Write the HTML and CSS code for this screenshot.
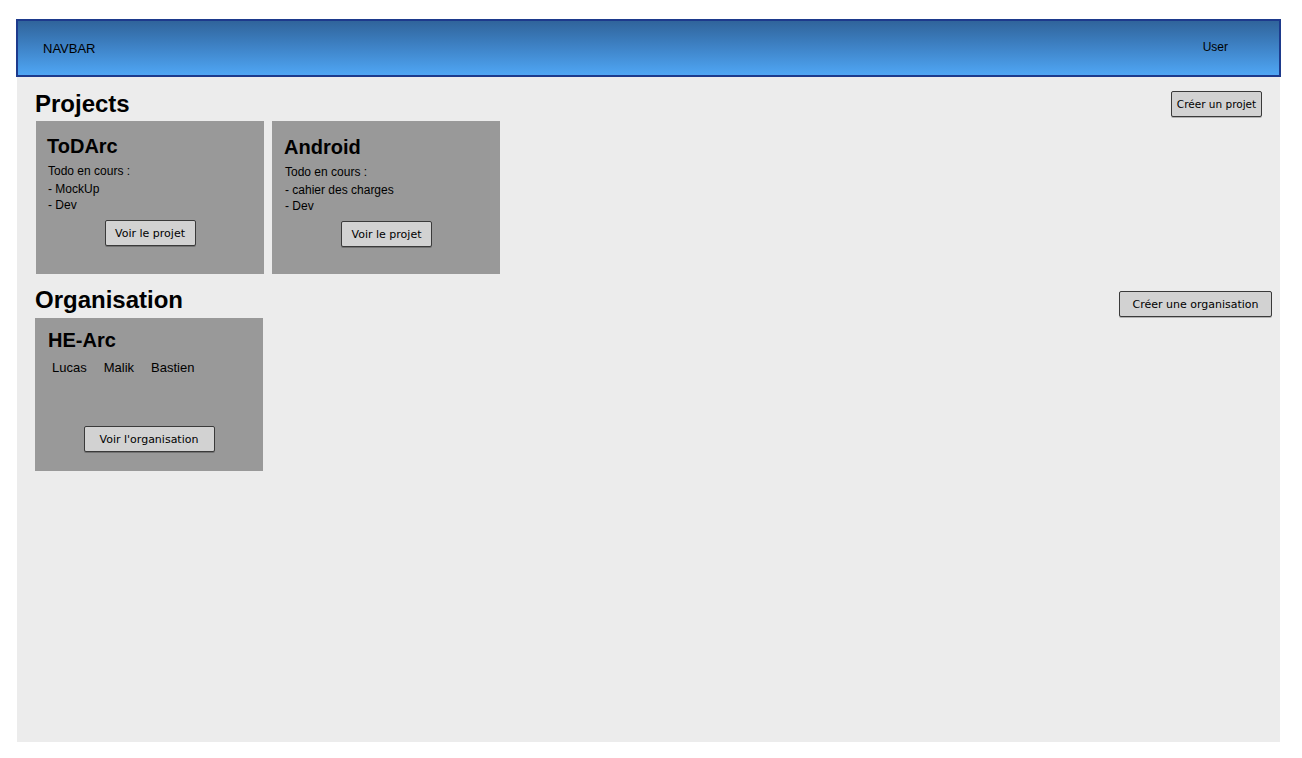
FILE: index.html
```html
<!DOCTYPE html>
<html lang="fr">
<head>
<meta charset="utf-8">
<title>Mockup</title>
<link rel="stylesheet" href="styles.css">
</head>
<body>
<div class="canvas">
  <header class="navbar">
    <span class="brand">NAVBAR</span>
    <span class="user">User</span>
  </header>
  <main class="content">
    <section class="section">
      <div class="section-head">
        <h2 class="section-title">Projects</h2>
        <button class="sketch-btn btn-new-project">Créer un projet</button>
      </div>
      <div class="cards cards-projects">
        <div class="card">
          <h3 class="card-title">ToDArc</h3>
          <p class="card-line first">Todo en cours :</p>
          <p class="card-line gap">- MockUp</p>
          <p class="card-line">- Dev</p>
          <button class="sketch-btn btn-view">Voir le projet</button>
        </div>
        <div class="card card-shift">
          <h3 class="card-title">Android</h3>
          <p class="card-line first">Todo en cours :</p>
          <p class="card-line gap">- cahier des charges</p>
          <p class="card-line">- Dev</p>
          <button class="sketch-btn btn-view">Voir le projet</button>
        </div>
      </div>
    </section>
    <section class="section section-org">
      <div class="section-head">
        <h2 class="section-title">Organisation</h2>
        <button class="sketch-btn btn-new-org">Créer une organisation</button>
      </div>
      <div class="cards cards-org">
        <div class="card org-card">
          <h3 class="card-title">HE-Arc</h3>
          <div class="members">
            <span>Lucas</span><span>Malik</span><span>Bastien</span>
          </div>
          <button class="sketch-btn btn-view-org">Voir l'organisation</button>
        </div>
      </div>
    </section>
  </main>
</div>
</body>
</html>
```
FILE: styles.css
```css
* { box-sizing: border-box; }
html, body { margin: 0; padding: 0; background: #ffffff; }
body {
  font-family: "Liberation Sans", Arial, sans-serif;
  color: #000;
}
.canvas {
  margin: 19px 0 0 17px;
  width: 1263px;
  height: 723px;
  background: #ececec;
  display: flex;
  flex-direction: column;
}
.navbar {
  margin-left: -1px;
  width: 1265px;
  height: 58px;
  border: 2px solid #1d3a8c;
  background: linear-gradient(to bottom, #30649b 0%, #3f84c8 50%, #4fa6f4 100%);
  display: flex;
  align-items: center;
  justify-content: space-between;
  padding: 0 51px 0 25px;
}
.brand { font-size: 13px; margin-top: 1px; }
.user { font-size: 12px; margin-top: -2px; }

.content { padding: 0 0 0 18px; }
.section-head {
  display: flex;
  align-items: flex-start;
  justify-content: space-between;
  height: 32px;
  margin-top: 11px;
}
.section-org .section-head { margin-top: 10px; }
.section-title {
  margin: 0;
  font-size: 24px;
  line-height: 32px;
  font-weight: bold;
}
.sketch-btn {
  font-family: "DejaVu Sans", sans-serif;
  font-size: 11px;
  color: #000;
  background: #d2d2d2;
  border: 1px solid #3a3a3a;
  border-radius: 2px;
  box-shadow: 0 1px 0 rgba(0,0,0,0.25);
  height: 26px;
  padding: 0;
  cursor: pointer;
}
.btn-new-project { width: 91px; margin-top: 3px; margin-right: 18px; font-size: 10.5px; }
.btn-new-org { width: 153px; margin-top: 7px; margin-right: 8px; }

.cards { display: flex; gap: 8px; }
.cards-projects { margin-top: 1px; padding-left: 1px; }
.cards-org { margin-top: 2px; }
.card {
  width: 228px;
  height: 153px;
  background: #999999;
  display: flex;
  flex-direction: column;
  padding: 13px 11px 0 11px;
}
.card-shift { padding-top: 14px; padding-left: 12px; }
.card-title {
  margin: 0;
  font-size: 20px;
  line-height: 24px;
  font-weight: bold;
}
.card-line {
  margin: 0;
  font-size: 12px;
  line-height: 16px;
  padding-left: 1px;
}
.card-line.first { margin-top: 5px; }
.card-line.gap { margin-top: 2px; }
.btn-view { width: 91px; align-self: center; margin-top: 7px; }

.org-card { padding: 10px 13px 19px 13px; }
.members {
  display: flex;
  gap: 17px;
  padding-left: 4px;
  margin-top: 8px;
  font-size: 13px;
  line-height: 16px;
}
.btn-view-org { width: 131px; align-self: center; margin-top: auto; }
```
